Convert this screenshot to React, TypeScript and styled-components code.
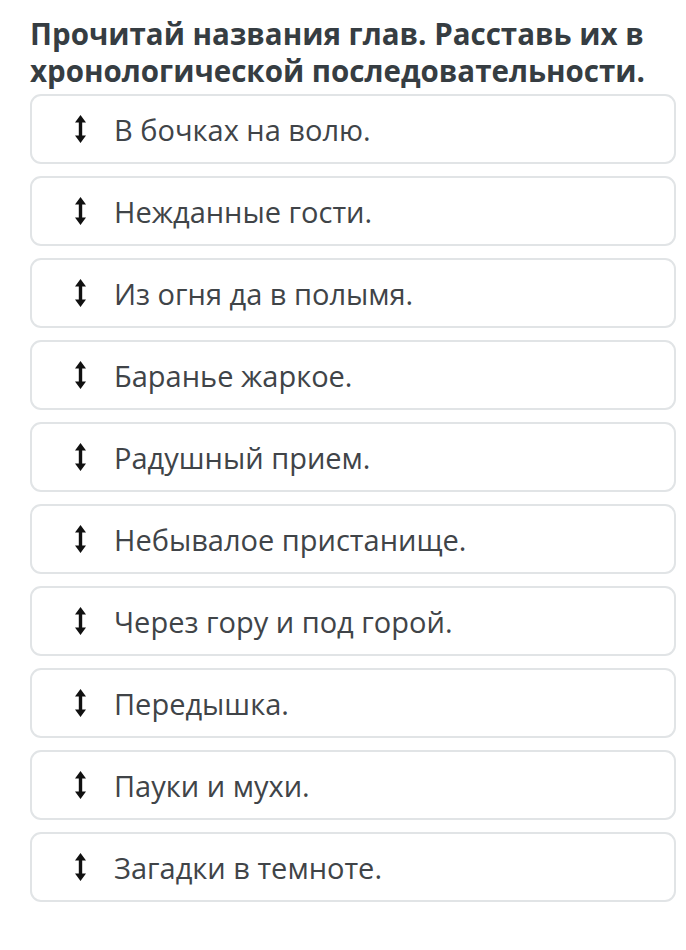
import React from "react";
import styled, { createGlobalStyle } from "styled-components";

const Global = createGlobalStyle`
  html, body { margin: 0; padding: 0; background: #ffffff; }
  body { font-family: "Open Sans", "Noto Sans", sans-serif; }
`;

const Page = styled.div`
  width: 686px;
  box-sizing: border-box;
  padding: 15px 10px 0 30px;
`;

const Title = styled.h1`
  margin: 0 0 5px 0;
  font-family: "Open Sans", "Noto Sans", sans-serif;
  font-weight: 700;
  font-size: 29.5px;
  line-height: 37px;
  color: #363d42;
`;

const List = styled.div`
  display: flex;
  flex-direction: column;
  gap: 12px;
  width: 646px;
`;

const Card = styled.div`
  height: 70px;
  box-sizing: border-box;
  border: 2px solid #e1e4e6;
  border-radius: 11px;
  background: #ffffff;
  display: flex;
  align-items: center;
  padding-left: 43px;
  gap: 28px;
`;

const Label = styled.span`
  font-family: "Open Sans", "Noto Sans", sans-serif;
  font-size: 29px;
  color: #404448;
  line-height: 1;
`;

const Handle = () => (
  <svg width="11" height="28" viewBox="0 0 11 28" aria-hidden="true">
    <path d="M5.5 0 L11 7.5 H7.2 V20.5 H11 L5.5 28 L0 20.5 H3.8 V7.5 H0 Z" fill="#111" />
  </svg>
);

const items = [
  "В бочках на волю.",
  "Нежданные гости.",
  "Из огня да в полымя.",
  "Баранье жаркое.",
  "Радушный прием.",
  "Небывалое пристанище.",
  "Через гору и под горой.",
  "Передышка.",
  "Пауки и мухи.",
  "Загадки в темноте.",
];

export default function App() {
  return (
    <>
      <Global />
      <Page>
        <Title>
          Прочитай названия глав. Расставь их в хронологической последовательности.
        </Title>
        <List>
          {items.map((t) => (
            <Card key={t}>
              <Handle />
              <Label>{t}</Label>
            </Card>
          ))}
        </List>
      </Page>
    </>
  );
}
